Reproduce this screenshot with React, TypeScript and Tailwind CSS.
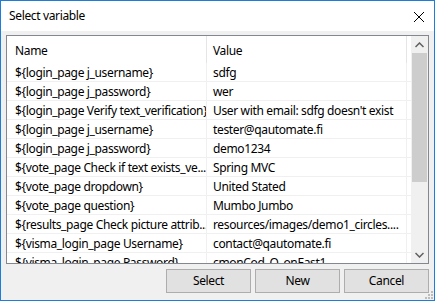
import React from "react";

const rows: [string, string][] = [
  ["${login_page j_username}", "sdfg"],
  ["${login_page j_password}", "wer"],
  ["${login_page Verify text_verification}", "User with email: sdfg doesn't exist"],
  ["${login_page j_username}", "tester@qautomate.fi"],
  ["${login_page j_password}", "demo1234"],
  ["${vote_page Check if text exists_ve...", "Spring MVC"],
  ["${vote_page dropdown}", "United Stated"],
  ["${vote_page question}", "Mumbo Jumbo"],
  ["${results_page Check picture attrib...", "resources/images/demo1_circles...."],
  ["${visma_login_page Username}", "contact@qautomate.fi"],
  ["${visma_login_page Password}", "cmonCod_O_onEast1"],
];

export default function App() {
  return (
    <div
      className="w-[435px] h-[301px] border border-[#1c7ed6] flex flex-col bg-[#f0f0f0] text-black overflow-hidden tracking-[-0.35px]"
      style={{ fontFamily: '"Noto Sans", "Segoe UI", sans-serif' }}
    >
      <div className="h-[30px] bg-white flex items-center justify-between pl-[8px] pr-[9px] shrink-0">
        <span className="text-[12px]">Select variable</span>
        <svg width="12" height="12" viewBox="0 0 12 12" className="mt-[1px]">
          <path d="M1 1 L11 11 M11 1 L1 11" stroke="#000" strokeWidth="1" fill="none" />
        </svg>
      </div>
      <div className="flex-1 flex flex-col pt-[4px] px-[5px] relative">
        <div className="h-[229px] border border-[#828790] bg-white flex shrink-0">
          <div className="flex-1 flex flex-col overflow-hidden text-[12px]">
            <div className="h-[27px] flex shrink-0">
              <div className="w-[200px] pl-[8px] pt-[2px] flex items-center border-r border-[#e5e5e5]">Name</div>
              <div className="w-[200px] pl-[6px] pt-[2px] flex items-center border-r border-[#e5e5e5]">Value</div>
            </div>
            {rows.map(([n, v], i) => (
              <div key={i} className="h-[19px] flex shrink-0 border-b border-[#f0f0f0]">
                <div className="w-[200px] pl-[8px] pt-[1px] flex items-center border-r border-[#f0f0f0] whitespace-nowrap overflow-hidden">
                  {n}
                </div>
                <div className="w-[200px] pl-[6px] pt-[1px] flex items-center border-r border-[#f0f0f0] whitespace-nowrap overflow-hidden">
                  {v}
                </div>
              </div>
            ))}
          </div>
          <div className="w-[17px] bg-[#f0f0f0] flex flex-col shrink-0">
            <div className="h-[17px] flex items-center justify-center">
              <svg width="9" height="6" viewBox="0 0 9 6">
                <path d="M0.5 5 L4.5 1 L8.5 5" stroke="#606060" strokeWidth="1.5" fill="none" />
              </svg>
            </div>
            <div className="h-[129px] mx-[1px] bg-[#cdcdcd]" />
            <div className="flex-1" />
            <div className="h-[17px] flex items-center justify-center">
              <svg width="9" height="6" viewBox="0 0 9 6">
                <path d="M0.5 1 L4.5 5 L8.5 1" stroke="#606060" strokeWidth="1.5" fill="none" />
              </svg>
            </div>
          </div>
        </div>
        <div className="flex justify-end gap-[4px] mt-[5px] text-[12px]">
          <button className="w-[85px] h-[24px] bg-[#e1e1e1] border border-[#adadad]">Select</button>
          <button className="w-[85px] h-[24px] bg-[#e1e1e1] border border-[#adadad]">New</button>
          <button className="w-[85px] h-[24px] bg-[#e1e1e1] border border-[#adadad]">Cancel</button>
        </div>
        <svg width="9" height="9" viewBox="0 0 9 9" className="absolute right-[1px] bottom-[1px]">
          {[
            [7, 1],
            [4, 4],
            [7, 4],
            [1, 7],
            [4, 7],
            [7, 7],
          ].map(([x, y], i) => (
            <rect key={i} x={x} y={y} width="2" height="2" fill="#bcbcbc" />
          ))}
        </svg>
      </div>
    </div>
  );
}
